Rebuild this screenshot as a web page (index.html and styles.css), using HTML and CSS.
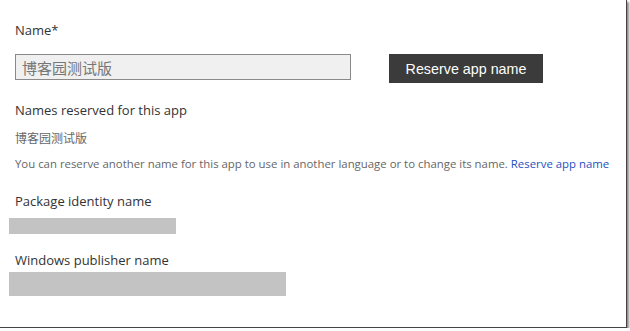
FILE: index.html
```html
<!DOCTYPE html>
<html lang="en">
<head>
  <meta charset="UTF-8" />
  <title>App identity</title>
  <link rel="stylesheet" href="styles.css">
</head>
<body>
  <div class="frame">
    <div class="label first">Name*</div>
    <div class="name-row">
      <input type="text" class="name-input" value="博客园测试版" readonly />
      <button class="reserve-button">Reserve app name</button>
    </div>

    <div class="label reserved">Names reserved for this app</div>
    <div class="reserved-name">博客园测试版</div>
    <div class="note">You can reserve another name for this app to use in another language or to change its name. <a href="#">Reserve app name</a></div>

    <div class="label package">Package identity name</div>
    <div class="hidden-bar short"></div>

    <div class="label publisher">Windows publisher name</div>
    <div class="hidden-bar long"></div>
  </div>
</body>
</html>
```

FILE: styles.css
```css
body {
  margin: 0;
  background: #fff;
  font-family: 'Open Sans', 'Noto Sans CJK SC', sans-serif;
  color: #333;
}
.frame {
  box-sizing: border-box;
  width: 627px;
  height: 328px;
  padding-left: 15px;
  background: #fff;
  border-right: 1px solid #444;
  border-bottom: 1px solid #444;
  box-shadow: 2px 2px 2px rgba(0, 0, 0, 0.45);
  overflow: hidden;
}
.label {
  font-size: 13px;
  line-height: 20px;
  color: #333;
}
.label.first { padding-top: 20px; }
.name-row {
  display: flex;
  align-items: flex-start;
  gap: 38px;
  margin-top: 14px;
}
.name-input {
  box-sizing: border-box;
  width: 336px;
  height: 26px;
  margin: 0;
  padding: 0 6px;
  border: 1px solid #8a8a8a;
  background: #f0f0f0;
  color: #777;
  font-family: 'Noto Sans CJK SC', sans-serif;
  font-size: 15px;
  outline: none;
}
.reserve-button {
  width: 154px;
  height: 29px;
  padding: 0;
  border: none;
  background: #3b3b3b;
  color: #fff;
  font-family: 'Liberation Sans', Arial, sans-serif;
  font-size: 14.3px;
  cursor: pointer;
}
.label.reserved { margin-top: 17px; }
.reserved-name {
  margin-top: 10px;
  font-family: 'Noto Sans CJK SC', sans-serif;
  font-size: 12px;
  line-height: 16px;
  color: #666;
}
.note {
  margin-top: 10px;
  font-size: 11.4px;
  line-height: 16px;
  color: #666;
  white-space: nowrap;
}
.note a {
  color: #1e50c0;
  text-decoration: none;
}
.label.package { margin-top: 19px; }
.label.publisher { margin-top: 16px; }
.hidden-bar {
  margin-left: -6px;
  background: #c3c3c3;
}
.hidden-bar.short {
  width: 167px;
  height: 16px;
  margin-top: 7px;
}
.hidden-bar.long {
  width: 277px;
  height: 24px;
  margin-top: 2px;
}
```
